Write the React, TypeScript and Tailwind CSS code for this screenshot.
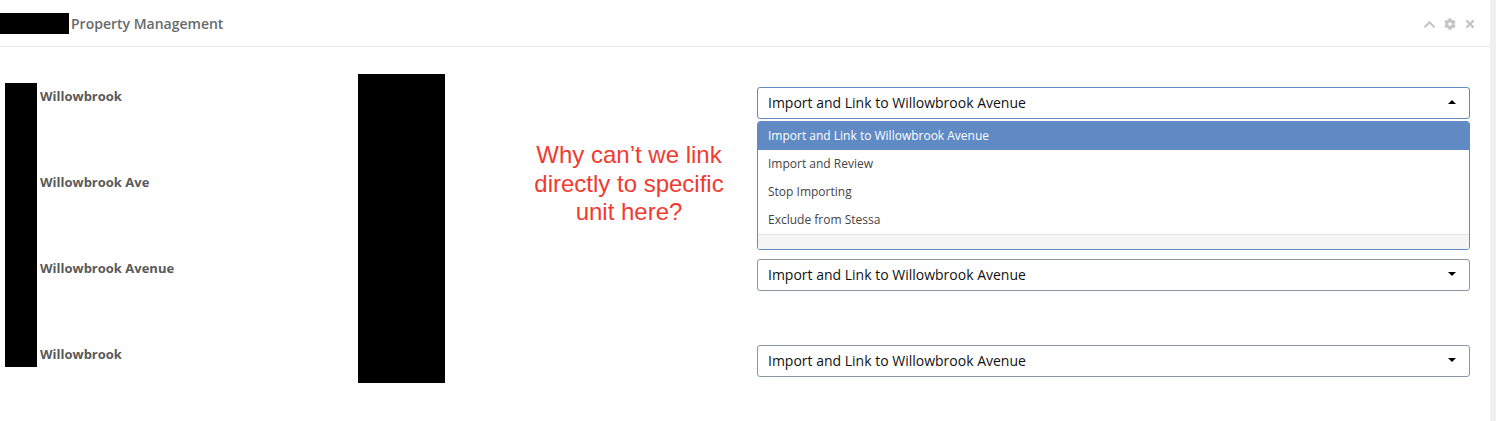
import { FaChevronUp, FaCog, FaTimes } from 'react-icons/fa'

const rows = ['Willowbrook', 'Willowbrook Ave', 'Willowbrook Avenue', 'Willowbrook']
const options = ['Import and Review', 'Stop Importing', 'Exclude from Stessa']
const selected = 'Import and Link to Willowbrook Avenue'

const Caret = ({ up }: { up?: boolean }) => (
  <svg width="8" height="4" viewBox="0 0 8 4" className="text-black">
    <path d={up ? 'M0 4 L4 0 L8 4 Z' : 'M0 0 L4 4 L8 0 Z'} fill="currentColor" />
  </svg>
)

const SelectBox = ({ open }: { open?: boolean }) => (
  <div
    className={`flex h-[32px] items-center justify-between rounded-[3px] border bg-white pr-[13px] pb-[2px] pl-[10px] text-[14px] text-[#111] ${
      open ? 'border-[#5f8ac4]' : 'border-[#8a96a3]'
    }`}
  >
    <span>{selected}</span>
    <Caret up={open} />
  </div>
)

export default function App() {
  return (
    <div className="flex h-[421px] w-[1496px] overflow-hidden bg-[#f0f0f0] font-['Open_Sans',sans-serif]">
      <div className="relative w-[1490px] bg-white">
        <div className="flex h-[47px] items-center justify-between border-b border-[#e7eaec] pl-[71px] pr-[14px]">
          <h1 className="text-[14px] font-semibold text-[#676a6c]">Property Management</h1>
          <div className="flex items-center gap-[8px] pt-[2px] text-[#c4c4c4]">
            <FaChevronUp size={13} />
            <FaCog size={12} />
            <FaTimes size={12} />
          </div>
        </div>

        <div className="pt-[40px]">
          {rows.map((name, i) => (
            <div key={i} className="flex h-[86px] items-start pl-[40px] pr-[20px]">
              <div className="w-[717px] text-[13px] leading-[18px] font-bold text-[#5a5a5a]">{name}</div>
              <div className="w-[713px]">{i === 1 ? null : <SelectBox open={i === 0} />}</div>
            </div>
          ))}
        </div>

        {/* dropdown menu open over row 2 */}
        <div className="absolute top-[121px] left-[757px] h-[129px] w-[713px] overflow-hidden rounded-[3px] border border-[#5f8ac4] bg-white text-[12px] text-[#444]">
          <div className="flex h-[28px] items-center bg-[#5f8ac4] pl-[10px] text-white">{selected}</div>
          {options.map((o) => (
            <div key={o} className="flex h-[28px] items-center pl-[10px]">
              {o}
            </div>
          ))}
          <div className="h-[15px] border-t border-[#e5e5e5] bg-[#f5f5f5]" />
        </div>

        {/* redactions */}
        <div className="absolute top-[13px] left-0 h-[21px] w-[69px] bg-black" />
        <div className="absolute top-[83px] left-[5px] h-[284px] w-[32px] bg-black" />
        <div className="absolute top-[74px] left-[358px] h-[309px] w-[87px] bg-black" />

        {/* annotation */}
        <div className="absolute top-[141px] left-[519px] w-[220px] text-center font-['Liberation_Sans',sans-serif] text-[24px] leading-[28.5px] text-[#f33a30]">
          Why can’t we link
          <br />
          directly to specific
          <br />
          unit here?
        </div>
      </div>
    </div>
  )
}
